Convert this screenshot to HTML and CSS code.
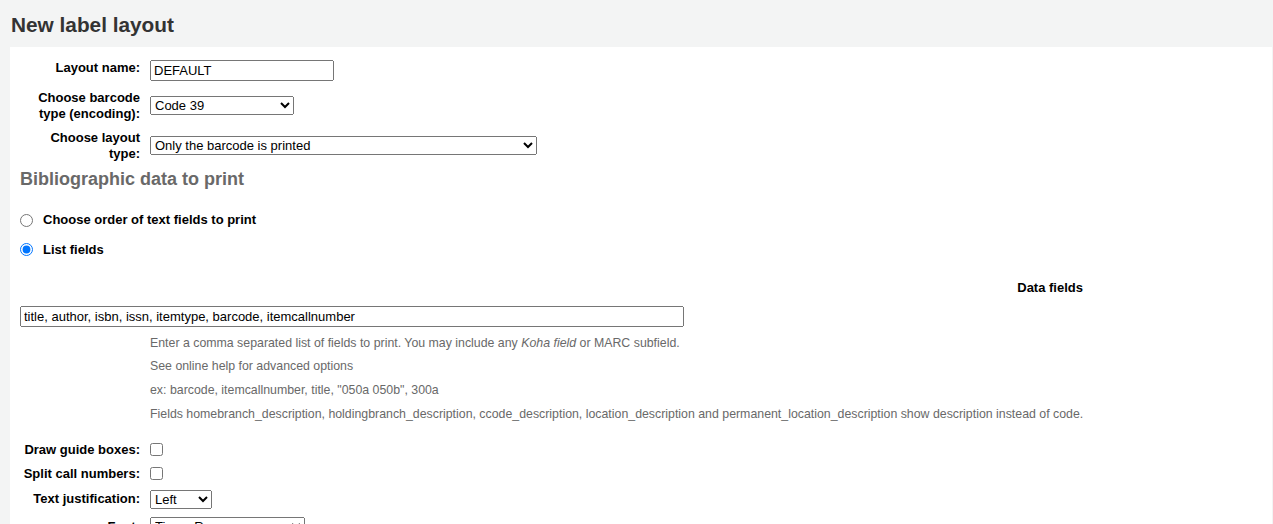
FILE: index.html
```html
<!DOCTYPE html>
<html lang="en">
<head>
<meta charset="utf-8">
<title>New label layout</title>
<link rel="stylesheet" href="styles.css">
</head>
<body>
<header class="page-head">
  <h1 class="page-title">New label layout</h1>
</header>
<main class="page-section">
  <div class="rows">
    <div class="row row-top">
      <label class="row-label" for="name">Layout name:</label>
      <input class="field field-name" id="name" type="text" value="DEFAULT">
    </div>
    <div class="row">
      <label class="row-label" for="barcode">Choose barcode type (encoding):</label>
      <select class="field field-barcode" id="barcode"><option>Code 39</option></select>
    </div>
    <div class="row">
      <label class="row-label" for="ltype">Choose layout type:</label>
      <select class="field field-ltype" id="ltype"><option>Only the barcode is printed</option></select>
    </div>
  </div>

  <h3 class="section-title">Bibliographic data to print</h3>

  <div class="radios">
    <label class="radio-row"><input class="radio" type="radio" name="mode"> <span>Choose order of text fields to print</span></label>
    <label class="radio-row"><input class="radio" type="radio" name="mode" checked> <span>List fields</span></label>
  </div>

  <div class="data-fields">Data fields</div>
  <input class="field field-list" type="text" value="title, author, isbn, issn, itemtype, barcode, itemcallnumber">

  <div class="hints">
    <div class="hint">Enter a comma separated list of fields to print. You may include any <em>Koha field</em> or MARC subfield.</div>
    <div class="hint">See online help for advanced options</div>
    <div class="hint">ex: barcode, itemcallnumber, title, "050a 050b", 300a</div>
    <div class="hint">Fields homebranch_description, holdingbranch_description, ccode_description, location_description and permanent_location_description show description instead of code.</div>
  </div>

  <div class="rows rows-bottom">
    <div class="row">
      <label class="row-label" for="guide">Draw guide boxes:</label>
      <input class="check" id="guide" type="checkbox">
    </div>
    <div class="row">
      <label class="row-label" for="split">Split call numbers:</label>
      <input class="check" id="split" type="checkbox">
    </div>
    <div class="row">
      <label class="row-label" for="just">Text justification:</label>
      <select class="field field-just" id="just"><option>Left</option></select>
    </div>
    <div class="row">
      <label class="row-label" for="font">Font:</label>
      <select class="field field-font" id="font"><option>Times-Roman</option></select>
    </div>
  </div>
</main>
</body>
</html>
```

FILE: styles.css
```css
html, body {
  margin: 0;
  padding: 0;
}

body {
  background: #f3f4f4;
  font-family: "Liberation Sans", Arial, sans-serif;
  font-size: 13px;
  color: #000;
  overflow: hidden;
}

.page-head {
  padding: 13px 0 10px 11px;
}

.page-title {
  margin: 0;
  font-size: 20.8px;
  line-height: 24px;
  font-weight: bold;
  color: #333;
}

.page-section {
  background: #fff;
  margin: 0 1px 0 10px;
  padding: 13px 10px 40px 10px;
  min-height: 600px;
}

.rows {
  display: flex;
  flex-direction: column;
  gap: 9px;
}

.rows-bottom {
  margin-top: 19px;
  gap: 8.3px;
}

.row {
  display: grid;
  grid-template-columns: 120px auto;
  column-gap: 10px;
  align-items: center;
  justify-items: start;
}

.row-top {
  align-items: start;
}

.row-label {
  justify-self: end;
  text-align: right;
  font-weight: bold;
  line-height: 1.2;
  color: #000;
}

.field {
  font-family: "Liberation Sans", Arial, sans-serif;
  font-size: 13px;
  box-sizing: border-box;
  margin: 0;
}

.field-name { width: 184px; height: 21px; }
.field-barcode { width: 144px; height: 19px; }
.field-ltype { width: 387px; height: 19px; }
.field-just { width: 62px; height: 19px; }
.field-font { width: 155px; height: 19px; }

.field-list {
  display: block;
  width: 664px;
  height: 21px;
  margin-top: 10px;
}

.section-title {
  margin: 8px 0 0 0;
  font-size: 18px;
  line-height: 21.6px;
  font-weight: bold;
  color: #696969;
}

.radios {
  margin-top: 21.5px;
  display: flex;
  flex-direction: column;
  gap: 14px;
}

.radio-row {
  display: flex;
  align-items: center;
  gap: 10px;
  font-weight: bold;
  line-height: 1.2;
}

.radio {
  margin: 0;
  width: 13px;
  height: 13px;
}

.data-fields {
  margin-top: 22.5px;
  width: 1063px;
  text-align: right;
  font-weight: bold;
  line-height: 1.2;
}

.hints {
  margin-top: 8px;
  padding-left: 130px;
  display: flex;
  flex-direction: column;
  gap: 6.7px;
}

.hint {
  font-size: 12.35px;
  line-height: 17px;
  color: #696969;
}

.check {
  margin: 0;
  width: 13px;
  height: 13px;
}
```
